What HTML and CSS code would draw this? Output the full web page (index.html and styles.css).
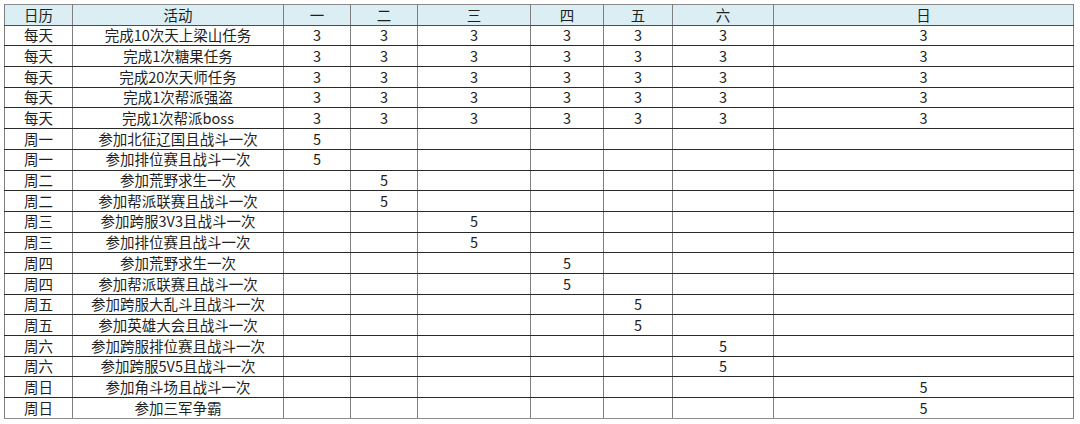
FILE: index.html
```html
<!DOCTYPE html>
<html lang="zh">
<head>
<meta charset="utf-8">
<title>活动日历</title>
<link rel="stylesheet" href="styles.css">
</head>
<body>
<table class="sheet">
  <colgroup>
    <col class="c-day"><col class="c-act"><col class="c-1"><col class="c-2"><col class="c-3"><col class="c-4"><col class="c-5"><col class="c-6"><col class="c-7">
  </colgroup>
  <thead>
    <tr><th>日历</th><th>活动</th><th>一</th><th>二</th><th>三</th><th>四</th><th>五</th><th>六</th><th>日</th></tr>
  </thead>
  <tbody>
    <tr><td>每天</td><td>完成10次天上梁山任务</td><td>3</td><td>3</td><td>3</td><td>3</td><td>3</td><td>3</td><td>3</td></tr>
    <tr><td>每天</td><td>完成1次糖果任务</td><td>3</td><td>3</td><td>3</td><td>3</td><td>3</td><td>3</td><td>3</td></tr>
    <tr><td>每天</td><td>完成20次天师任务</td><td>3</td><td>3</td><td>3</td><td>3</td><td>3</td><td>3</td><td>3</td></tr>
    <tr><td>每天</td><td>完成1次帮派强盗</td><td>3</td><td>3</td><td>3</td><td>3</td><td>3</td><td>3</td><td>3</td></tr>
    <tr><td>每天</td><td>完成1次帮派boss</td><td>3</td><td>3</td><td>3</td><td>3</td><td>3</td><td>3</td><td>3</td></tr>
    <tr><td>周一</td><td>参加北征辽国且战斗一次</td><td>5</td><td></td><td></td><td></td><td></td><td></td><td></td></tr>
    <tr><td>周一</td><td>参加排位赛且战斗一次</td><td>5</td><td></td><td></td><td></td><td></td><td></td><td></td></tr>
    <tr><td>周二</td><td>参加荒野求生一次</td><td></td><td>5</td><td></td><td></td><td></td><td></td><td></td></tr>
    <tr><td>周二</td><td>参加帮派联赛且战斗一次</td><td></td><td>5</td><td></td><td></td><td></td><td></td><td></td></tr>
    <tr><td>周三</td><td>参加跨服3V3且战斗一次</td><td></td><td></td><td>5</td><td></td><td></td><td></td><td></td></tr>
    <tr><td>周三</td><td>参加排位赛且战斗一次</td><td></td><td></td><td>5</td><td></td><td></td><td></td><td></td></tr>
    <tr><td>周四</td><td>参加荒野求生一次</td><td></td><td></td><td></td><td>5</td><td></td><td></td><td></td></tr>
    <tr><td>周四</td><td>参加帮派联赛且战斗一次</td><td></td><td></td><td></td><td>5</td><td></td><td></td><td></td></tr>
    <tr><td>周五</td><td>参加跨服大乱斗且战斗一次</td><td></td><td></td><td></td><td></td><td>5</td><td></td><td></td></tr>
    <tr><td>周五</td><td>参加英雄大会且战斗一次</td><td></td><td></td><td></td><td></td><td>5</td><td></td><td></td></tr>
    <tr><td>周六</td><td>参加跨服排位赛且战斗一次</td><td></td><td></td><td></td><td></td><td></td><td>5</td><td></td></tr>
    <tr><td>周六</td><td>参加跨服5V5且战斗一次</td><td></td><td></td><td></td><td></td><td></td><td>5</td><td></td></tr>
    <tr><td>周日</td><td>参加角斗场且战斗一次</td><td></td><td></td><td></td><td></td><td></td><td></td><td>5</td></tr>
    <tr><td>周日</td><td>参加三军争霸</td><td></td><td></td><td></td><td></td><td></td><td></td><td>5</td></tr>
  </tbody>
</table>
</body>
</html>
```

FILE: styles.css
```css
html, body {
  margin: 0;
  padding: 0;
  background: #ffffff;
}
body {
  padding: 4px 0 0 4px;
  font-family: "Noto Sans CJK SC", "Noto Sans", sans-serif;
  font-size: 14.5px;
  color: #1f1f1f;
}
.sheet {
  border-collapse: collapse;
  table-layout: fixed;
  width: 1069px;
  border: 1px solid #8c8c8c;
}
.c-day { width: 68px; }
.c-act { width: 211px; }
.c-1 { width: 67px; }
.c-2 { width: 67px; }
.c-3 { width: 113px; }
.c-4 { width: 73px; }
.c-5 { width: 69px; }
.c-6 { width: 101px; }
.c-7 { width: 300px; }
.sheet th,
.sheet td {
  height: 19.7px;
  padding: 0;
  text-align: center;
  vertical-align: middle;
  line-height: 1;
  font-weight: normal;
  white-space: nowrap;
  border-left: 1px solid #7f7f7f;
  border-right: 1px solid #7f7f7f;
  border-top: 1px solid #2a2a2a;
  border-bottom: 1px solid #2a2a2a;
}
.sheet thead th {
  background: #daeef3;
  border-top: 1px solid #8c8c8c;
  border-bottom: 1px solid #4d4d4d;
}
.sheet tbody tr:last-child td {
  border-bottom: 1px solid #8c8c8c;
}
```
